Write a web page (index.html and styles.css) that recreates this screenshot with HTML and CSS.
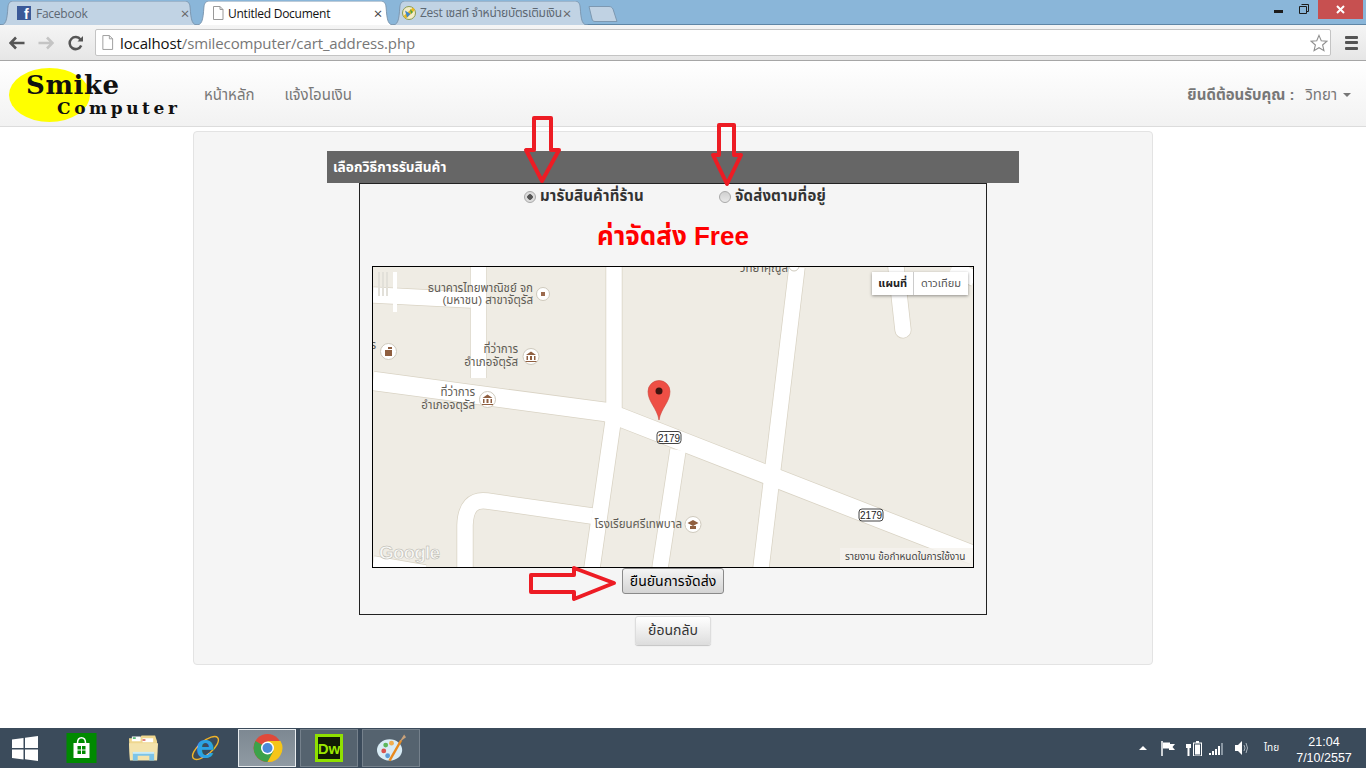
FILE: index.html
```html
<!DOCTYPE html>
<html lang="th">
<head>
<meta charset="utf-8">
<title>Untitled Document</title>
<link rel="stylesheet" href="styles.css">
</head>
<body>
<div class="titlebar">
  <div class="tabs">
    <div class="tab t1">
      <svg class="tab-shape" viewBox="0 0 200 24" preserveAspectRatio="none"><path class="tab-bg" d="M0 24C6 24 7 20 8 6 8.500 2 10 0 14 0H186C190 0 191.500 2 192 6 193 20 194 24 200 24"/></svg>
      <svg class="favicon" viewBox="0 0 14 14"><rect width="14" height="14" fill="#3b5998"/><text x="7" y="13" class="fb-f">f</text></svg>
      <span class="tab-title">Facebook</span><span class="tab-x">×</span>
    </div>
    <div class="tab t2 active">
      <svg class="tab-shape" viewBox="0 0 200 24" preserveAspectRatio="none"><path class="tab-bg" d="M0 24C6 24 7 20 8 6 8.500 2 10 0 14 0H186C190 0 191.500 2 192 6 193 20 194 24 200 24"/></svg>
      <svg class="favicon" viewBox="0 0 14 14"><path d="M2.500.500H9L12 3.500V13.500H2.500Z" fill="#fff" stroke="#999"/><path d="M9 .5V3.500H12" fill="none" stroke="#999"/></svg>
      <span class="tab-title">Untitled Document</span><span class="tab-x">×</span>
    </div>
    <div class="tab t3">
      <svg class="tab-shape" viewBox="0 0 200 24" preserveAspectRatio="none"><path class="tab-bg" d="M0 24C6 24 7 20 8 6 8.500 2 10 0 14 0H186C190 0 191.500 2 192 6 193 20 194 24 200 24"/></svg>
      <svg class="favicon" viewBox="0 0 14 14"><circle cx="7" cy="7" r="6.500" fill="#f3ecc8" stroke="#8a9a50"/><path d="M1.500 10L11 1.500 13 4 4 12.500Z" fill="#e8b820"/><path d="M3 4.500L8.500 8 5 11.500Z" fill="#3f86c8"/><path d="M8 3L11 6 9 8Z" fill="#4aa048"/></svg>
      <span class="tab-title">Zest เซสท์ จำหน่ายบัตรเติมเงิน</span><span class="tab-x">×</span>
    </div>
    <svg class="newtab" viewBox="0 0 30 16"><path d="M1 .5H21C23 .5 24 1.500 25 3L29 15.500H7C5 15.500 4.500 14.500 4 13Z" fill="#c0d2e3" stroke="#7d98b1"/></svg>
  </div>
  <div class="winctl">
    <svg class="win-min" viewBox="0 0 9 3"><rect width="9" height="3" fill="#1c1c1c"/></svg>
    <svg class="win-max" viewBox="0 0 10 10"><path d="M2.500.500H9.500V7.500H7.500M.500 2.500H7.500V9.500H.500Z" fill="none" stroke="#1c1c1c"/></svg>
    <div class="win-close"><svg viewBox="0 0 9 9"><path d="M1 1L8 8M8 1L1 8" stroke="#fff" stroke-width="2"/></svg></div>
  </div>
</div>

<div class="toolbar">
  <svg class="nav-ic back" viewBox="0 0 16 14"><path d="M7 1.500L1.500 7 7 12.500M2 7H15.500" fill="none" stroke="#555" stroke-width="2.600"/></svg>
  <svg class="nav-ic fwd" viewBox="0 0 16 14"><path d="M9 1.500L14.500 7 9 12.500M14 7H.500" fill="none" stroke="#c4c4c4" stroke-width="2.600"/></svg>
  <svg class="nav-ic reload" viewBox="0 0 16 16"><path d="M13.200 10.500A6 6 0 1 1 12.500 4.500" fill="none" stroke="#555" stroke-width="2.500"/><path d="M9.500 6.500H15V1Z" fill="#555"/></svg>
  <div class="urlbar">
    <svg class="url-page" viewBox="0 0 14 16"><path d="M2 .500H9L12.500 4V15.500H2Z" fill="#fff" stroke="#999"/><path d="M9 .500V4H12.500" fill="none" stroke="#999"/></svg>
    <span class="url"><span class="url-host">localhost</span>/smilecomputer/cart_address.php</span>
    <svg class="star" viewBox="0 0 20 20"><path d="M10 1.500L12.500 7.500 18.800 8 14 12.200 15.500 18.500 10 15.200 4.500 18.500 6 12.200 1.200 8 7.500 7.500Z" fill="#fff" stroke="#8f8f8f" stroke-width="1.200"/></svg>
  </div>
  <div class="menu-ic"><span></span><span></span><span></span></div>
</div>

<header class="navbar">
  <svg class="logo" viewBox="0 0 172 56">
    <ellipse cx="40.500" cy="28" rx="40.500" ry="27" fill="#ffff00"/>
    <text x="17" y="27" class="logo-a">Smike</text>
    <text x="48" y="47" class="logo-b">Computer</text>
  </svg>
  <nav class="nav-links"><a>หน้าหลัก</a><a>แจ้งโอนเงิน</a></nav>
  <div class="user"><b>ยินดีต้อนรับคุณ :</b><span>วิทยา</span><i class="caret"></i></div>
</header>

<main class="page">
  <section class="panel">
    <h2 class="heading">เลือกวิธีการรับสินค้า</h2>
    <div class="box">
      <div class="radios">
        <label class="radio r1"><input type="radio" name="ship" checked>มารับสินค้าที่ร้าน</label>
        <label class="radio"><input type="radio" name="ship">จัดส่งตามที่อยู่</label>
      </div>
      <h1 class="fee">ค่าจัดส่ง Free</h1>
      <div class="map">
        <svg class="map-svg" viewBox="373 267 600 300">
          <rect x="373" y="267" width="600" height="300" fill="#efece4"/>
          <g class="road-edge">
            <path d="M373 295L471 300"/><path d="M478.500 267V378"/><path d="M614 267V415L592 568"/><path d="M797 267L761 568"/><path d="M678 450L660 568"/>
            <path d="M592 516L487 501Q466 498 465 525V568"/><path d="M373 381L606 412 622 418 973 555"/><path d="M896 267L903 330"/><path d="M373 564L425 573"/><path d="M952 267L975 279"/>
          </g>
          <g class="road">
            <path d="M373 295L471 300"/><path d="M478.500 267V378"/><path d="M614 267V415L592 568"/><path d="M797 267L761 568"/><path d="M678 450L660 568"/>
            <path d="M592 516L487 501Q466 498 465 525V568"/><path d="M373 381L606 412 622 418 973 555"/><path d="M896 267L903 330"/><path d="M373 564L425 573"/><path d="M952 267L975 279"/>
          </g>
          <rect x="393" y="272" width="4" height="40" fill="#fff"/>
          <path d="M379 272V296M383 272V296M387 272V296" stroke="#e2e0d9" stroke-width="2"/>

          <text x="533" y="292" class="lbl end">ธนาคารไทยพาณิชย์ จก</text>
          <text x="533" y="304" class="lbl end">(มหาชน) สาขาจัตุรัส</text>
          <circle cx="543" cy="294" r="6.500" class="poi"/><rect x="541" y="292" width="4" height="4" fill="#9c6b4f"/>
          <text x="518" y="353" class="lbl end">ที่ว่าการ</text>
          <text x="518" y="366" class="lbl end">อำเภอจัตุรัส</text>
          <circle cx="531" cy="356.500" r="8" class="poi"/><path class="bank" d="M526 355L531 351.500 536 355ZM526.500 356H528V360H526.500ZM530 356H532V360H530ZM534 356H535.500V360H534ZM525.500 361H536.500V362H525.500Z"/>
          <text x="475" y="396" class="lbl end">ที่ว่าการ</text>
          <text x="475" y="409" class="lbl end">อำเภอจตุรัส</text>
          <circle cx="487.500" cy="399.500" r="8" class="poi"/><path class="bank" d="M482.500 398L487.500 394.500 492.500 398ZM483 399H484.500V403H483ZM486.500 399H488.500V403H486.500ZM490.500 399H492V403H490.500ZM482 404H493V405H482Z"/>
          <text x="376" y="349" class="lbl end">ร</text>
          <circle cx="388.500" cy="351.500" r="8" class="poi"/><path class="bank" d="M385 350H392V356H385ZM388 347H392V349H388Z"/>
          <text x="788" y="272" class="lbl end">วิทยาคุณูล</text>
          <circle cx="794" cy="266" r="5" class="poi"/>
          <text x="682" y="528" class="lbl end">โรงเรียนศรีเทพบาล</text>
          <circle cx="693" cy="524.500" r="8" class="poi"/><path class="bank" d="M687.500 523L693 520 698.500 523 693 526ZM690 526H696V529H690Z"/>

          <g class="shield"><rect x="657" y="431.500" width="24" height="12" rx="3"/><text x="669" y="441.500">2179</text></g>
          <g class="shield"><rect x="859" y="509" width="24" height="12" rx="3"/><text x="871" y="519">2179</text></g>

          <path d="M659 420C657 408 648 402 648 391.500A11 11 0 0 1 670 391.500C670 402 661 408 659 420Z" fill="#ee4f45" stroke="#c9453c" stroke-width=".6"/>
          <circle cx="659" cy="391" r="3.500" fill="#401410"/>

          <text x="379" y="559" class="google">Google</text>
          <rect x="840" y="548" width="133" height="19" fill="#f5f3ee" opacity=".8"/>
          <text x="845" y="560" class="terms">รายงาน ข้อกำหนดในการใช้งาน</text>
        </svg>
        <div class="maptype"><span class="on">แผนที่</span><span>ดาวเทียม</span></div>
      </div>
      <div class="confirm-row"><button class="btn confirm" type="button">ยืนยันการจัดส่ง</button></div>
    </div>
    <div class="back-row"><button class="btn back-btn" type="button">ย้อนกลับ</button></div>
  </section>
</main>

<svg class="marks" viewBox="0 0 1366 768">
  <g class="arrow">
    <path d="M534 118H551V150H559L542 181 526 150H534Z"/>
    <path d="M719 125H734V155H741L727 184 713 155H719Z"/>
    <path d="M531 575H574V568L614 583 574 599V592H531Z"/>
  </g>
</svg>

<footer class="taskbar">
  <div class="start"><svg viewBox="0 0 26 25"><path d="M0 3.500L11.500 2V12H0ZM13 1.800L26 0V12H13ZM0 13.500H11.500V23.500L0 22ZM13 13.500H26V25L13 23.200Z" fill="#fff"/></svg></div>
  <div class="task"><svg viewBox="0 0 30 30"><rect width="30" height="30" fill="#008a00"/><path d="M7 10H23V25H7Z" fill="#fff"/><path d="M11 10C11 3 19 3 19 10" fill="none" stroke="#fff" stroke-width="1.500"/><path d="M11 13H14.500V16.500H11ZM15.500 13H19V16.500H15.500ZM11 17.500H14.500V21H11ZM15.500 17.500H19V21H15.500Z" fill="#008a00"/></svg></div>
  <div class="task"><svg viewBox="0 0 32 30"><path d="M1 5H12L14 2H28L30 8V27H2Z" fill="#efd78f"/><path d="M4 3H13V8H4ZM15 5H26V9H15Z" fill="#fff"/><rect x="5" y="4" width="3" height="1.500" fill="#36a85a"/><rect x="15" y="6" width="3" height="1.500" fill="#d9534f"/><path d="M1 10H31L30 28H2Z" fill="#f4e3ac"/><path d="M5 28V19H27V28H22V23H10V28Z" fill="#7dc4e8"/><path d="M5 19H27V21H5Z" fill="#c8ecf9"/></svg></div>
  <div class="task"><svg viewBox="0 0 32 32"><ellipse cx="16" cy="16" rx="17" ry="7" transform="rotate(-40 16 16)" fill="none" stroke="#f0b429" stroke-width="1.500"/><text x="16" y="27" class="ie-e">e</text></svg></div>
  <div class="task lit on"><svg viewBox="0 0 30 30"><circle cx="15" cy="15" r="14" fill="#e04a3a"/><path d="M15 15L3 8A14 14 0 0 0 15 29L22 17Z" fill="#3ca24a"/><path d="M15 8H28A14 14 0 0 1 15 29L21 18Z" fill="#f5c518"/><circle cx="15" cy="15" r="6.500" fill="#fff"/><circle cx="15" cy="15" r="5" fill="#4a8ad8"/></svg></div>
  <div class="task lit"><div class="dw"><span>Dw</span></div></div>
  <div class="task lit"><svg viewBox="0 0 32 30"><ellipse cx="14" cy="17" rx="13" ry="11" fill="#d8ecf5"/><circle cx="8" cy="18" r="2.500" fill="#d9534f"/><circle cx="10" cy="12" r="2.500" fill="#5cb85c"/><circle cx="16" cy="10" r="2.500" fill="#f0ad4e"/><circle cx="12" cy="23" r="2.500" fill="#5b9bd5"/><path d="M14 28L26 7" stroke="#e88a1d" stroke-width="2.500"/><path d="M24 9L29 1 31 4Z" fill="#c9a27a"/></svg></div>
  <div class="tray">
    <svg class="tr-up" viewBox="0 0 8 4"><path d="M0 4L4 0 8 4Z" fill="#fff"/></svg>
    <svg class="tr-flag" viewBox="0 0 15 15"><path d="M1 0V15" stroke="#fff" stroke-width="1.500"/><path d="M2 1.500H9V3H14L11.500 6 14 9H8V7.500H2Z" fill="#fff"/></svg>
    <svg class="tr-batt" viewBox="0 0 16 15"><path d="M1 0V3M4 0V3M0 3H5V7H3.500V15H1.500V7H0Z" fill="#fff"/><rect x="7.500" y="2" width="8" height="13" fill="none" stroke="#fff"/><rect x="9" y="3.500" width="5" height="10" fill="#fff"/><rect x="10" y="0" width="3" height="2" fill="#fff"/></svg>
    <svg class="tr-sig" viewBox="0 0 15 13"><path d="M0 11H2V13H0ZM3 9H5V13H3ZM6 7H8V13H6ZM9 4H11V13H9Z" fill="#fff"/><rect x="12" y="1" width="2" height="12" fill="#8a97a3"/></svg>
    <svg class="tr-vol" viewBox="0 0 14 14"><path d="M0 4H3L7 0V14L3 10H0Z" fill="#fff"/><path d="M9 4Q11 7 9 10M11 2Q14 7 11 12" fill="none" stroke="#aab4bd"/></svg>
    <span class="lang">ไทย</span>
    <div class="clock"><div>21:04</div><div>7/10/2557</div></div>
  </div>
</footer>
</body>
</html>
```
FILE: styles.css
```css
* { box-sizing: border-box; }
html, body { margin: 0; padding: 0; }
body {
  position: relative;
  width: 1366px;
  height: 768px;
  overflow: hidden;
  display: flex;
  flex-direction: column;
  background: #fff;
  font-family: "Liberation Sans", "Noto Sans Thai", "Noto Sans", sans-serif;
}

/* browser title bar and tabs */
.titlebar { height: 25px; flex: none; display: flex; background: #8ab6d9; border-bottom: 1px solid #5f86a6; }
.tabs { display: flex; padding: 1px 0 0 0; height: 25px; }
.tab {
  position: relative;
  height: 24px;
  margin-right: -2px;
  display: flex;
  align-items: center;
  color: #5d6873;
  font: 12px "Open Sans", "Noto Sans Thai", sans-serif;
  letter-spacing: -.25px;
}
.t1 { width: 198px; padding: 0 9px 0 17px; }
.t2 { width: 198px; padding: 0 12px 0 15px; }
.t3 { width: 196px; padding: 0 17px 0 10px; }
.tab > :not(.tab-shape) { position: relative; }
.tab-shape { position: absolute; inset: 0; width: 100%; height: 100%; }
.tab-bg { fill: #c1d3e4; stroke: #7d98b1; vector-effect: non-scaling-stroke; }
.active { color: #111; z-index: 1; }
.active .tab-bg { fill: #fff; }
.favicon { width: 14px; height: 14px; flex: none; margin-right: 5px; }
.t2 .favicon { margin-right: 3px; }
.t3 .favicon { margin-right: 4px; }
.fb-f { font: bold 14px "Liberation Sans", sans-serif; fill: #fff; text-anchor: start; }
.tab-title { flex: 1; min-width: 0; white-space: nowrap; }
.tab-x { flex: none; margin-left: 4px; font-size: 15px; color: #666; line-height: 1; }
.active .tab-x { color: #444; }
.newtab { width: 30px; height: 16px; margin: 5px 0 0 2px; }

.winctl { margin-left: auto; display: flex; align-items: flex-start; padding-right: 3px; }
.win-min { width: 9px; height: 3px; margin-top: 10px; }
.win-max { width: 10px; height: 10px; margin: 4px 9px 0 16px; }
.win-close { width: 45px; height: 19px; background: #c75050; display: flex; align-items: center; justify-content: center; }
.win-close svg { width: 9px; height: 9px; }

/* toolbar */
.toolbar {
  height: 36px;
  flex: none;
  display: flex;
  align-items: center;
  padding-left: 9px;
  background: linear-gradient(#f5f5f5, #e6e6e6);
  border-bottom: 1px solid #a6a6a6;
}
.nav-ic { flex: none; }
.back { width: 16px; height: 14px; }
.fwd { width: 16px; height: 14px; margin-left: 13px; }
.reload { width: 16px; height: 16px; margin-left: 14px; }
.urlbar {
  margin-left: 11px;
  width: 1236px;
  height: 27px;
  display: flex;
  align-items: center;
  padding-left: 5px;
  background: #fff;
  border: 1px solid #c4c4c4;
  border-radius: 2px;
}
.url-page { width: 13px; height: 15px; flex: none; }
.url { margin-left: 6px; font: 15px "Open Sans", sans-serif; color: #777; letter-spacing: -.12px; }
.url-host { color: #111; }
.star { width: 18px; height: 18px; margin-left: auto; margin-right: 2px; }
.menu-ic { margin-left: 14px; width: 13px; display: flex; flex-direction: column; gap: 2.500px; }
.menu-ic span { height: 3px; background: #555; border-radius: 1px; }

/* site navbar */
.navbar {
  height: 66px;
  flex: none;
  display: flex;
  align-items: center;
  padding-left: 9px;
  background: linear-gradient(#fff, #f2f2f2);
  border-bottom: 1px solid #dcdcdc;
  color: #777;
  font-size: 15px;
}
.logo { width: 172px; height: 56px; flex: none; margin-top: 2px; }
.logo-a { font: bold 26px "DejaVu Serif", serif; letter-spacing: .6px; fill: #111; }
.logo-b { font: bold 17px "DejaVu Serif", serif; letter-spacing: 3.600px; fill: #111; }
.nav-links { display: flex; gap: 30px; margin-left: 23px; padding-top: 3px; }
.user { margin-left: auto; padding: 3px 15px 0 0; display: flex; align-items: center; }
.user b { margin-right: 11px; }
.caret { margin-left: 6px; width: 0; height: 0; border: 4px solid transparent; border-top-color: #777; border-bottom: 0; }

/* content */
.page { flex: 1; padding: 4px 20px 0 0; }
.panel {
  width: 960px;
  height: 534px;
  margin: 0 auto;
  padding-top: 19px;
  background: #f5f5f5;
  border: 1px solid #e3e3e3;
  border-radius: 4px;
}
.heading {
  width: 692px;
  height: 32px;
  margin: 0 auto;
  padding-left: 6px;
  background: #666;
  color: #fff;
  font-size: 13.700px;
  font-weight: bold;
  line-height: 33px;
}
.box {
  width: 628px;
  height: 432px;
  margin: 0 auto;
  border: 1px solid #222;
}
.radios { display: flex; height: 25px; align-items: center; padding-left: 164px; font-size: 15px; font-weight: bold; color: #333; }
.radio { display: flex; align-items: center; letter-spacing: .15px; }
.r1 { width: 195px; }
.radio input {
  appearance: none;
  width: 12px;
  height: 12px;
  margin: 0 4px 0 0;
  border: 1px solid #a9a9a9;
  border-radius: 50%;
  background: linear-gradient(#d0d0d0, #e8e8e8);
}
.radio input:checked { background: radial-gradient(circle, #555 0 2.500px, #dcdcdc 3px); }
.fee { margin: 12px 0 0; height: 45px; text-align: center; color: #f00; font-size: 26px; font-weight: bold; line-height: 30px; }
.map {
  position: relative;
  width: 602px;
  height: 302px;
  margin: 0 auto;
  border: 1px solid #000;
}
.map-svg { display: block; width: 600px; height: 300px; }
.road-edge path, .road path { fill: none; stroke-linejoin: round; }
.road-edge path { stroke: #d9d3c4; stroke-width: 17px; }
.road path { stroke: #fff; stroke-width: 15.500px; }
.road path:nth-child(8), .road-edge path:nth-child(8) { stroke-linecap: round; }
.road path:nth-child(7) { stroke-width: 18.500px; }
.road-edge path:nth-child(7) { stroke-width: 20px; }
.lbl { font: 11.500px "Liberation Sans", "Noto Sans Thai", sans-serif; fill: #5f5c55; }
.end { text-anchor: end; }
.poi { fill: #fff; stroke: #cfcabd; stroke-width: 1; }
.bank { fill: #8f5f40; }
.shield rect { fill: #fff; stroke: #444; stroke-width: 1; }
.shield text { font: 10px "Liberation Sans", sans-serif; fill: #222; text-anchor: middle; }
.google { font: bold 19px "Liberation Sans", sans-serif; fill: #f8f8f5; stroke: #b5b3ab; stroke-width: .5px; letter-spacing: -.9px; }
.terms { font: 10px "Liberation Sans", "Noto Sans Thai", sans-serif; fill: #444; }
.maptype {
  position: absolute;
  top: 5px;
  right: 5px;
  display: flex;
  background: #fff;
  box-shadow: 0 1px 3px rgba(0, 0, 0, .4);
  font-size: 11px;
  color: #555;
}
.maptype span { height: 23px; line-height: 23px; padding: 0 7px; }
.maptype .on { color: #222; font-weight: bold; border-right: 1px solid #ccc; padding: 0 6px; }
.confirm-row { display: flex; justify-content: center; }
.btn {
  font-family: inherit;
  font-size: 14px;
  color: #222;
  border-radius: 3px;
  background: linear-gradient(#fff, #dedede);
  padding: 0;
}
.confirm { width: 102px; height: 26px; border: 1px solid #8a8a8a; background: linear-gradient(#f4f4f4, #d4d4d4); color: #000; }
.back-row { display: flex; justify-content: center; margin-top: 1px; }
.back-btn { width: 76px; height: 29px; border: 1px solid #ddd; box-shadow: 0 1px 1px rgba(0, 0, 0, .2); color: #333; }

/* hand-drawn red annotations, over the page */
.marks { position: absolute; inset: 0; width: 1366px; height: 768px; pointer-events: none; }
.arrow path { fill: none; stroke: #ed1c24; stroke-width: 4px; stroke-linejoin: round; }

/* Windows taskbar */
.taskbar { height: 40px; flex: none; display: flex; align-items: center; background: #3b4b5b; color: #fff; }
.start { width: 52px; display: flex; padding-left: 12px; }
.start svg { width: 26px; height: 25px; }
.task { width: 58px; height: 38px; margin-right: 4px; display: flex; align-items: center; justify-content: center; border: 1px solid transparent; }
.task svg { width: 31px; height: 30px; overflow: visible; }
.ie-e { font: bold 36px "Liberation Sans", sans-serif; fill: #2ba3e3; text-anchor: middle; }
.lit { background: #55636f; border-color: #75818c; }
.lit.on { background: linear-gradient(#7d8892, #8f9aa3); border-color: #e8ecef; }
.dw { width: 28px; height: 28px; background: #111a05; border: 3px solid #8fe000; display: flex; align-items: center; justify-content: center; }
.dw span { font: bold 15px "Liberation Sans", sans-serif; color: #9be800; }
.tray { margin-left: auto; display: flex; align-items: center; padding-right: 9px; }
.tr-up { width: 8px; height: 4px; }
.tr-flag { width: 15px; height: 15px; margin-left: 14px; }
.tr-batt { width: 16px; height: 15px; margin-left: 10px; }
.tr-sig { width: 15px; height: 13px; margin-left: 7px; }
.tr-vol { width: 14px; height: 14px; margin-left: 11px; }
.lang { width: 18px; margin-left: 15px; font-size: 10px; white-space: nowrap; }
.clock { margin: 3px 0 0 9px; width: 66px; font: 12.500px/16px "Liberation Sans", sans-serif; text-align: center; }
```
